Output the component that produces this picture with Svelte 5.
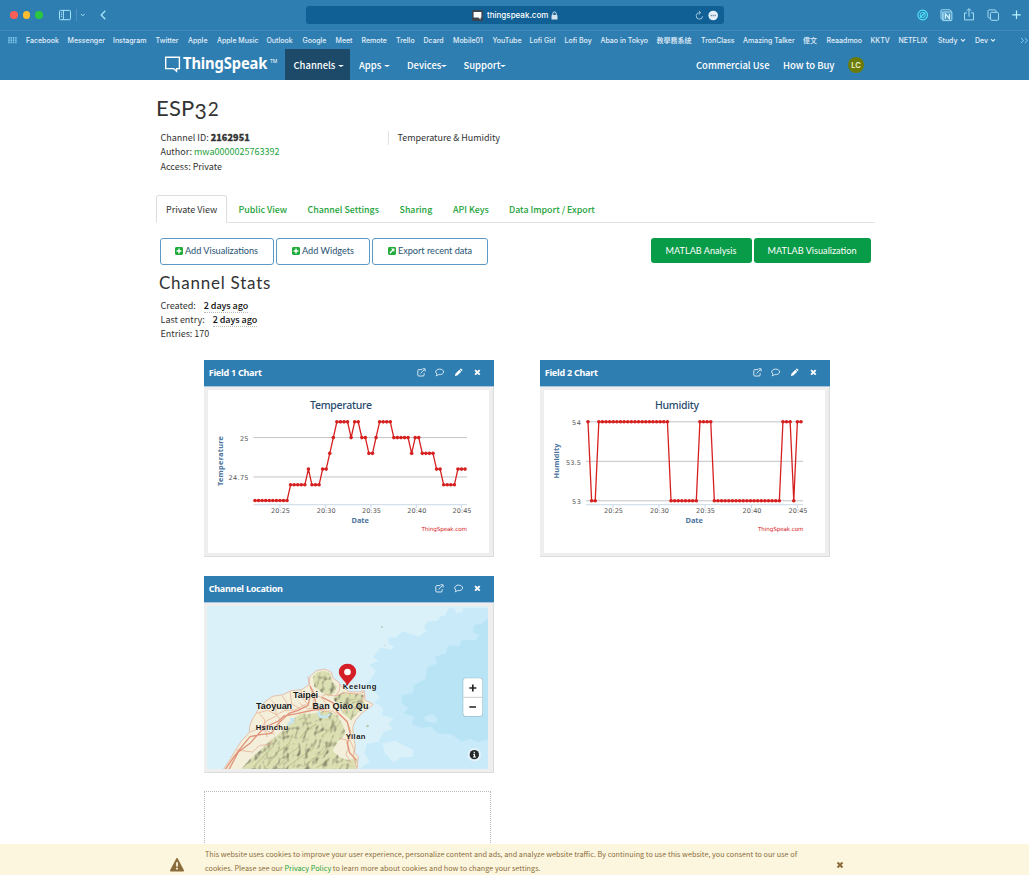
<script>
  const bookmarks = [
    ['Facebook', 41.5], ['Messenger', 45.5], ['Instagram', 42.5], ['Twitter', 32.5], ['Apple', 29],
    ['Apple Music', 49.5], ['Outlook', 36], ['Google', 33], ['Meet', 26], ['Remote', 34.5],
    ['Trello', 27.5], ['Dcard', 29.5], ['Mobile01', 39.5], ['YouTube', 37], ['Lofi Girl', 35],
    ['Lofi Boy', 36], ['Abao in Tokyo', 56], ['教學務系統', 44.5], ['TronClass', 42], ['Amazing Talker', 60],
    ['偉文', 23.5], ['Reaadmoo', 44], ['KKTV', 28], ['NETFLIX', 39.5], ['Study', 37, true], ['Dev', 45, true]
  ];
  const cols = bookmarks.map((b) => b[1] + 'px').join(' ');

  const expand = (runs) => runs.flatMap(([v, n]) => Array(n).fill(v));
  const temperature = expand([
    [24.6, 10], [24.7, 5], [24.8, 1], [24.7, 3], [24.8, 2], [24.9, 1], [25, 1], [25.1, 4], [25, 1],
    [25.1, 2], [25, 2], [24.9, 2], [25, 1], [25.1, 4], [25, 5], [24.9, 1], [25, 2], [24.9, 4],
    [24.8, 2], [24.7, 4], [24.8, 3]
  ]);
  const humidity = expand([[54, 1], [53, 2], [54, 20], [53, 8], [54, 4], [53, 19], [54, 3], [53, 1], [54, 2]]);

  const charts = [
    {
      head: 'Field 1 Chart', title: 'Temperature', tx: 102, tw: 62, x0: 47, step: 3.56, left: 45.5, right: 259,
      yl: 14.5, ylen: 50, ymid: 71, ticks: [[25, '25', 8.5], [24.75, '24.75', 20]],
      y: (v) => 47.6 - (v - 25) * 157.4,
      data: temperature, xt: [72, 117.7, 163, 208.3, 253.5], dx: 143.5, cx: 259
    },
    {
      head: 'Field 2 Chart', title: 'Humidity', tx: 111, tw: 44, x0: 44, step: 3.61, left: 42, right: 259,
      yl: 15, ylen: 35, ymid: 71, ticks: [[54, '54', 9], [53.5, '53.5', 15], [53, '53', 9]],
      y: (v) => 31.8 + (54 - v) * 79,
      data: humidity, xt: [69, 115, 161, 207.5, 253.5], dx: 141.5, cx: 259.5
    }
  ];
  const times = ['20:25', '20:30', '20:35', '20:40', '20:45'];
  const pts = (c) => c.data.map((v, i) => [c.x0 + i * c.step, c.y(v)]);
</script>

{#snippet caret()}<i class="caret"></i>{/snippet}

{#snippet tools(edit)}
  <span class="tools">
    <svg width="9" height="9" viewBox="0 0 9 9"><path d="M5 1.6H1.8Q.8 1.6.8 2.6V7q0 1 1 1h4.3q1 0 1-1V5.2M3.4 5.5L7.6 1.3M5.4.8H8.1V3.5" /></svg>
    <svg width="9" height="9" viewBox="0 0 9 9"><path d="M4.7 1.1C2.5 1.1.7 2.3.7 3.9c0 .9.5 1.6 1.3 2.1 0 .8-.4 1.3-.8 1.8 1.1-.2 1.8-.6 2.4-1.2 2.9.4 5-1 5-2.7 0-1.6-1.7-2.8-3.9-2.8Z" /></svg>
    {#if edit}
      <svg width="9" height="9" viewBox="0 0 9 9"><path class="solid" d="M.9 8.1L1.4 5.7 5.3 1.8 7.2 3.7 3.3 7.6ZM5.8 1.3l.6-.6q.4-.3.8 0L8.3 1.8q.3.4 0 .8l-.6.6Z" /></svg>
    {/if}
    <svg width="9" height="9" viewBox="0 0 9 9"><path class="cross" d="M2.1 2.1L6.7 6.7M6.7 2.1L2.1 6.7" /></svg>
  </span>
{/snippet}

<div class="page">
  <header>
    <div class="toolbar">
      <span class="lights"><i></i><i></i><i></i></span>
      <svg class="side" width="50" height="14" viewBox="0 0 50 14"><rect x="1.5" y="2.4" width="11" height="9.3" rx="1" /><path d="M5.4 2.4V11.7M3 4.8h1M3 6.6h1M3 8.4h1" /><path class="sep" d="M18.5 1V13" /><path d="M23 6.2l1.8 1.5 1.8-1.5" /><path class="back" d="M47.3 2.8L43.2 7l4.1 4.2" /></svg>
      <div class="address">
        <svg width="11" height="11" viewBox="0 0 11 11"><rect width="11" height="11" rx="1" fill="#3c4650" /><path d="M1.6 2h7.8v5.6H8.6V9.6L6.2 7.6H1.6Z" fill="#fff" /></svg>
        <span>thingspeak.com</span>
        <svg width="7" height="9" viewBox="0 0 7 9"><rect x=".5" y="4" width="6" height="4.6" rx=".7" fill="#d5e3ee" /><path d="M1.8 4.2V2.6q0-1.7 1.7-1.7t1.7 1.7V4.2" fill="none" stroke="#d5e3ee" /></svg>
        <svg class="reload" width="24" height="11" viewBox="0 0 24 11"><path d="M7.6 6.2A3.2 3.2 0 1 1 5 2.8M3.8.8L5.7 2.8 3.8 4.6" fill="none" stroke="#a9d0e8" stroke-width=".9" /><circle cx="18.2" cy="5.5" r="4.8" fill="#e5f1fa" /><path d="M15.6 5.5h5.2" stroke="#63829f" stroke-width="1.3" stroke-dasharray="1.2 .8" /></svg>
      </div>
      <svg class="actions" width="108" height="16" viewBox="0 0 108 16">
        <g fill="none" stroke="#a4def5">
          <circle cx="7.7" cy="8" r="4.8" stroke="#4fe2fa" stroke-width="1.2" /><circle cx="7.7" cy="8" r="2.6" stroke="#4fe2fa" /><path d="M5.2 10.5l5-5" stroke="#4fe2fa" stroke-width="1.2" />
          <path d="M26.3 4.3l1.6 1.5V13.4L26 11.4V3.4Q26 2.8 26.8 2.8h7.9l2 1.6" /><rect x="27.9" y="4.9" width="9" height="8.7" rx=".6" fill="#a4def5" fill-opacity=".3" /><path d="M30.4 11.7V6.9l4 4.8V6.9" stroke="#d3f2ff" stroke-width="1.2" />
          <path d="M51.9 5.9H49.5v7h9v-7H56.1M54 9.7V1.8M51.8 3.8L54 1.6l2.2 2.2" />
          <rect x="73" y="2.9" width="8" height="8" rx="1.3" /><rect x="75.5" y="5.3" width="8" height="8" rx="1.3" fill="#2f7eb1" />
          <path d="M97.3 7.8h8.4M101.5 3.6v8.4" stroke="#b8f4ff" stroke-width="1.2" />
        </g>
      </svg>
    </div>
    <div class="bookmarks">
      <svg width="9" height="7" viewBox="0 0 9 7"><path d="M1 0V7M3.3 0V7M5.6 0V7M7.9 0V7" stroke="#7fc6ee" stroke-width="1.5" stroke-dasharray="1.7 .6" /></svg>
      <div class="marks" style:grid-template-columns={cols}>
        {#each bookmarks as [name, , menu]}
          <span>{name}{#if menu}<svg width="6" height="5" viewBox="0 0 6 5"><path d="M1 1.2l2 2 2-2" fill="none" stroke="#e0effa" stroke-width="1.2" /></svg>{/if}</span>
        {/each}
      </div>
      <svg width="9" height="7" viewBox="0 0 9 7"><path d="M1 1l2.6 2.5L1 6M4.8 1l2.6 2.5L4.8 6" fill="none" stroke="#83cdf2" stroke-width="1" /></svg>
    </div>
    <nav>
      <svg class="logo" width="121" height="31" viewBox="0 0 121 31">
        <path d="M1.7 8.2H15.4V19.6H12.6V22.3L9.6 19.6H1.7Z" fill="none" stroke="#fff" stroke-width="1.4" />
        <text transform="translate(19 20) scale(.92 1)" textLength="91.8">ThingSpeak</text>
        <text class="tm" x="106" y="14">TM</text>
      </svg>
      <a class="active" href="#channels">Channels {@render caret()}</a>
      <a href="#apps" class="apps">Apps {@render caret()}</a>
      <a href="#devices" class="devices">Devices{@render caret()}</a>
      <a href="#support" class="support">Support{@render caret()}</a>
      <a href="#use" class="use">Commercial Use</a>
      <a href="#buy" class="buy">How to Buy</a>
      <span class="avatar">LC</span>
    </nav>
  </header>

  <main>
    <h1>ESP<span>3</span><em>2</em></h1>
    <section class="info">
      <div>
        <p>Channel ID: <b>2162951</b></p>
        <p>Author: <a href="#author">mwa0000025763392</a></p>
        <p>Access: Private</p>
      </div>
      <p class="desc">Temperature &amp; Humidity</p>
    </section>

    <div class="tabs">
      <span class="tab">Private View</span>
      <a href="#public">Public View</a>
      <a href="#settings">Channel Settings</a>
      <a href="#sharing">Sharing</a>
      <a href="#keys">API Keys</a>
      <a href="#data">Data Import / Export</a>
    </div>

    <div class="buttons">
      <button class="b1"><svg width="8" height="8" viewBox="0 0 8 8"><rect width="8" height="8" rx="1.4" fill="#20ab3c" /><path d="M4 1.6V6.4M1.6 4H6.4" stroke="#fff" stroke-width="1.4" /></svg>Add Visualizations</button>
      <button class="b2"><svg width="8" height="8" viewBox="0 0 8 8"><rect width="8" height="8" rx="1.4" fill="#20ab3c" /><path d="M4 1.6V6.4M1.6 4H6.4" stroke="#fff" stroke-width="1.4" /></svg>Add Widgets</button>
      <button class="b3"><svg width="8" height="8" viewBox="0 0 8 8"><rect width="8" height="8" rx="1.4" fill="#20ab3c" /><path d="M1.8 6.2L5 3" stroke="#fff" stroke-width="1.4" /><path d="M3 1.6H6.4V5Z" fill="#fff" /></svg>Export recent data</button>
      <button class="green g1">MATLAB Analysis</button>
      <button class="green g2">MATLAB Visualization</button>
    </div>

    <h2>Channel Stats</h2>
    <section class="stats">
      <p>Created: <span>2 days ago</span></p>
      <p>Last entry: <span>2 days ago</span></p>
      <p>Entries: 170</p>
    </section>

    <div class="cards">
      {#each charts as c}
        <article>
          <h3>{c.head}{@render tools(true)}</h3>
          <div class="body">
            <svg width="281" height="163" viewBox="0 0 281 163">
              <rect width="281" height="163" fill="#fff" />
              <text class="title" x={c.tx} y="18.7" textLength={c.tw}>{c.title}</text>
              {#each c.ticks as [v, label, w]}
                <path d="M{c.left} {c.y(v)}H{c.right}" stroke="#c4c4c4" />
                <text class="tick" x={c.left - 5 - w} y={c.y(v) + 3.4} textLength={w}>{label}</text>
              {/each}
              <path d="M{c.left} 114.7H{c.right}" stroke="#cbd9e6" />
              {#each c.xt as x, i}
                <path d="M{x} 115v3" stroke="#cbd9e6" />
                <text class="tick" x={x - 9} y="123.3" textLength="19">{times[i]}</text>
              {/each}
              <text class="axis" x={c.dx} y="133.3" textLength="17.5">Date</text>
              <text class="axis" transform="translate({c.yl} {c.ymid + c.ylen / 2}) rotate(-90)" textLength={c.ylen}>{c.title}</text>
              <text class="credit" x={c.cx - 45.5} y="141" textLength="45.5">ThingSpeak.com</text>
              <polyline points={pts(c).join(' ')} fill="none" stroke="#d62020" stroke-width="1.3" stroke-linejoin="round" />
              {#each pts(c) as [x, y]}<circle cx={x} cy={y} r="1.8" fill="#d62020" />{/each}
            </svg>
          </div>
        </article>
      {/each}

      <article>
        <h3>Channel Location{@render tools(false)}</h3>
        <div class="body map">
          <svg width="281" height="163" viewBox="22 108 842 489" preserveAspectRatio="none">
            <defs>
              <filter id="relief" x="0" y="0" width="100%" height="100%" color-interpolation-filters="sRGB">
                <feTurbulence type="fractalNoise" baseFrequency=".05 .04" numOctaves="2" seed="5" result="n" />
                <feDiffuseLighting in="n" surfaceScale="9" diffuseConstant="1.28" lighting-color="#fff" result="l"><feDistantLight azimuth="225" elevation="54" /></feDiffuseLighting>
                <feBlend in="SourceGraphic" in2="l" mode="multiply" result="b" />
                <feComposite in="b" in2="SourceGraphic" operator="in" result="c" />
                <feComponentTransfer in="SourceGraphic" result="s"><feFuncA type="linear" slope=".4" /></feComponentTransfer>
                <feMerge><feMergeNode in="c" /><feMergeNode in="s" /></feMerge>
              </filter>
            </defs>
            <rect x="22" y="108" width="842" height="489" fill="#dbf1fa" />
            <path fill="#c9eaf9" d="M864 115H745L738 135 720 140 712 152 684 154 672 170 680 184 655 199 607 184 590 202 565 204 566 222 583 228 575 240 542 232 520 262 536 273 508 285 528 302 512 330 490 350 525 365 540 380 525 398 550 414 546 435 582 446 565 460 578 478 552 485 536 515 501 521 494 550 510 576 477 597H864Z" />
            <path fill="#dbf1fa" d="M548 520L586 512 610 525 641 540 638 560 605 562 580 577 554 548ZM484 246l10-3 3 20-10 4ZM762 116l25-3 2 12-20 4Z" />
            <path fill="#b9e4f6" d="M864 145L845 162 823 164 818 187 838 196 826 211 786 209 778 229 744 226 738 250 705 260 712 280 682 292 677 328 642 345 640 369 608 375 604 398 625 415 611 430 645 440 634 462 665 474 695 470 713 490 755 493 785 515 811 506 835 517 864 508Z" />
            <path fill="#c9eaf9" d="M672 440l25-8 18 14-9 13-28-5ZM570 395l16-4 5 13-17 4ZM735 545l45 6 3 30-28 16H720Z" />
            <circle cx="546" cy="171" r="3" fill="#b9cdb8" /><circle cx="556" cy="226" r="2" fill="#b9cdb8" /><circle cx="503" cy="468" r="4" fill="#b9c7a8" />
            <path fill="#f3efda" stroke="#dfa78d" stroke-width="2" d="M70 600L88 573 108 540 125 513 149 487 150 468 158 448 174 421 196 395 218 379 250 374 274 362 305 359 327 345 330 320 350 302 375 297 395 307 400 325 415 335 425 350 448 365 475 366 493 362 496 390 520 403 506 416 487 428 467 451 459 472 461 499 466 525 464 548 475 560 472 600Z" />
            <g filter="url(#relief)" fill="#dcdfb2">
              <path d="M122 600L150 568 182 540 204 516 233 495 250 480 271 455 300 432 342 430 381 421 414 437 430 465 437 493 415 514 399 542 421 562 446 571 470 562V600Z" />
              <path d="M338 321L352 306 377 302 393 312 398 337 412 348 405 370 386 381 364 366 343 350ZM399 383L430 367 476 371 490 374 493 397 503 407 476 426 455 451 431 433Z" />
            </g>
            <path fill="none" stroke="#a9ad78" stroke-opacity=".55" stroke-width="3" d="M160 592L205 545 222 528M200 590L232 548 268 520 280 492M238 588L268 552 300 530M262 592L300 562 338 538 352 508M310 590L340 566 372 548 388 516M350 594L384 570M300 505L322 480 350 462M365 500L390 478 402 452M345 345L366 322 380 318M420 412L446 392 470 386" />
            <path fill="#c6e5ee" d="M270 443l16 2-4 12-15 10-5-5 10-8ZM357 420l6 14 16 3 10-8 3 6-13 10-19-1-8-14Z" />
            <g fill="none" stroke="#e6a58b" stroke-width="2">
              <path d="M170 430L204 421 230 434 257 421 286 420 320 402M179 430L195 450 196 480 225 493M213 389L229 405 228 431 243 451 232 474M247 377l14 22-3 22M271 366l5 36 24 14M303 361l8 27 16 18M151 486l31-12 19-22 29-14M330 347l-6-28M330 347l8 25 24 9 15 17-3 17-20 6-16-14 4-25M364 381l13-8 29 5 13-17 1-20M299 399l25 18 22-6 24 13 29-1 17 15M111 540l47 6 22-20 28-2 11-14M406 378l31-10 39 5 18-8M494 374l-9 22-22 17-19 3-16 12M443 460l10 25-3 25 13 28-2 22 10 34M420 505l20 5 5 27-7 15 15 26M182 475l17 11 3 15" />
            </g>
            <g fill="none" stroke="#e0937a" stroke-width="4">
              <path d="M77 598L101 563 126 530 151 500 182 494 214 490 239 457 268 430 295 421 325 406 331 379M88 598L116 546 151 520 172 496 194 473 236 453 252 438 291 431 341 420 386 415M331 348L344 374 349 412M367 382L399 398 412 426 442 455 451 490 443 520 449 547 470 571" />
            </g>
            <g class="places">
              <text x="280" y="383" textLength="75">Taipei</text>
              <text x="169" y="416" textLength="108">Taoyuan</text>
              <text x="338" y="418" textLength="168">Ban Qiao Qu</text>
              <text class="small" x="429" y="358" textLength="101">Keelung</text>
              <text class="small" x="168" y="479" textLength="97">Hsinchu</text>
              <text class="small" x="438" y="507" textLength="59">Yilan</text>
            </g>
            <path fill="#d51f26" d="M443 347C434 330 417 321 417 306a26 25 0 0 1 52 0C469 321 452 330 443 347Z" /><circle cx="443" cy="306" r="10" fill="#fff" />
            <rect x="788" y="323" width="61" height="117" rx="9" fill="#9cbfce" /><rect x="790" y="325" width="57" height="113" rx="7" fill="#fff" />
            <path d="M790 382H847" stroke="#ccc" stroke-width="3" /><path d="M808 354h21M818.5 343.5v21M808 411h20" stroke="#222" stroke-width="5" />
            <circle cx="823" cy="554" r="20" fill="#e6f3f8" /><circle cx="823" cy="554" r="14" fill="#252a2c" /><path d="M823 545v4M820 553h3.5v8M819 561h9" fill="none" stroke="#fff" stroke-width="3.5" />
          </svg>
        </div>
      </article>
      <i></i>
      <div class="drop"></div>
    </div>
  </main>

  <footer>
    <svg width="16" height="15" viewBox="0 0 16 15"><path d="M8 1.7L14.3 13.7H1.7Z" fill="#8a6d3b" stroke="#8a6d3b" stroke-width="1.4" stroke-linejoin="round" /><path d="M8 5.2V9.4M8 10.7V12.5" stroke="#fdf6df" stroke-width="1.8" /></svg>
    <div>
      <p>This website uses cookies to improve your user experience, personalize content and ads, and analyze website traffic. By continuing to use this website, you consent to our use of</p>
      <p>cookies. Please see our <a href="#privacy">Privacy Policy</a> to learn more about cookies and how to change your settings.</p>
    </div>
    <svg class="close" width="8" height="8" viewBox="0 0 8 8"><path d="M1.5 1.5L6.5 6.5M6.5 1.5L1.5 6.5" stroke="#8a6d3b" stroke-width="2.1" /></svg>
  </footer>
</div>

<style>
  :global(body) { margin: 0; background: #fff; }
  .page { width: 1029px; height: 875px; overflow: hidden; display: flex; flex-direction: column; font: 9px/14px 'Noto Sans CJK SC', 'Noto Sans', sans-serif; color: #333; }
  p, h1, h2, h3 { margin: 0; font-weight: 400; }
  p, a, span, button { white-space: nowrap; }
  a { text-decoration: none; color: #1ba239; }
  svg { flex: none; display: block; }
  header { height: 80px; flex: none; background: #2f7eb1; color: #fff; }
  .toolbar { height: 31px; box-sizing: border-box; display: flex; align-items: center; padding-left: 10px; border-bottom: 1px solid #4088b8; }
  .lights { display: flex; gap: 5px; width: 48px; }
  .lights i { width: 7.6px; height: 7.6px; border-radius: 50%; background: #fe5f57; }
  .lights i:nth-child(2) { background: #febc2e; }
  .lights i:nth-child(3) { background: #29c840; }
  .side { fill: none; stroke: #a4e4fb; }
  .side .sep { stroke: #4a90be; }
  .side .back { stroke-width: 1.3; }
  .address { width: 418px; height: 18px; margin-left: 198px; border-radius: 3px; background: #116095; display: flex; align-items: center; box-sizing: border-box; padding-left: 166px; font: 500 8px/18px Inter, sans-serif; }
  .address span { width: 61px; margin: 0 3px 0 4px; }
  .address .reload { margin-left: 137px; }
  .actions { margin-left: 191px; }
  .bookmarks { height: 18px; box-sizing: border-box; display: flex; align-items: center; padding: 1px 0 0 8px; font: 500 7px/17px Inter, 'Noto Sans CJK TC', sans-serif; color: #e3effa; }
  .marks { display: grid; width: 993px; margin-left: 9px; margin-right: 1px; }
  .marks span { display: flex; align-items: center; gap: 2px; height: 17px; }
  nav { height: 31px; display: flex; font-weight: 500; font-size: 9.45px; line-height: 31px; }
  nav a { color: #fff; display: flex; align-items: center; box-sizing: border-box; padding-top: 1px; }
  .logo { margin-left: 164px; }
  .logo text { font: 700 16px 'Noto Sans', sans-serif; fill: #fff; }
  .logo .tm { font: 5px 'Noto Sans', sans-serif; }
  .caret { border: 2.5px solid transparent; border-top: 2.5px solid #fff; border-bottom: 0; margin-left: 4px; margin-top: 1px; border-left-width: 3px; border-right-width: 3px; }
  .active { background: #1c4a68; width: 65px; padding-left: 8.5px; }
  .apps { margin-left: 9px; width: 48px; }
  .apps .caret, .active .caret { margin-left: 3px; }
  .devices { width: 56.5px; }
  .support { width: 232.5px; }
  .devices .caret, .support .caret { margin-left: 0; }
  .use { width: 87px; }
  .buy { width: 65px; }
  .avatar { width: 16px; height: 16px; border-radius: 50%; background: #6b7b06; font: 600 7.5px/17px Inter, sans-serif; text-align: center; margin-top: 8px; color: #f1f3d8; }
  main { flex: 1; min-height: 0; overflow: hidden; }
  h1 { font: 22px/28px Lato, sans-serif; margin: 14px 0 0 156px; height: 36.5px; letter-spacing: .2px; }
  h1 span { display: inline-block; font-size: 21px; line-height: 20px; transform: translateY(3px); }
  h1 em { font-style: normal; font-size: 19px; line-height: 20px; margin-left: .8px; }
  .info { display: flex; padding-left: 160.5px; height: 64px; }
  .info > div { width: 227px; }
  .info > div p { line-height: 14.7px; }
  .info b { font-weight: 900; -webkit-text-stroke: .3px #333; letter-spacing: .12px; }
  .desc { border-left: 1px solid #e2e2e2; height: 14px; padding-left: 9px; line-height: 14px; letter-spacing: -.03px; }
  .tabs { margin-left: 156px; width: 719px; height: 28px; box-sizing: border-box; border-bottom: 1px solid #e3e3e3; display: flex; line-height: 29px; font-weight: 500; font-size: 8.85px; }
  .tab { width: 71px; height: 28px; box-sizing: border-box; border: 1px solid #ddd; border-bottom-color: #fff; border-radius: 3px 3px 0 0; font-weight: 400; font-size: 9px; padding-left: 9px; margin-right: 11.5px; line-height: 27px; }
  .tabs a:nth-child(2) { width: 69px; }
  .tabs a:nth-child(3) { width: 92px; }
  .tabs a:nth-child(4) { width: 53.5px; }
  .tabs a:nth-child(5) { width: 56px; }
  .buttons { display: flex; margin: 15.5px 0 0 159.5px; height: 26.5px; }
  button { font: 9.15px/24px Lato, sans-serif; height: 26.5px; box-sizing: border-box; border: 1px solid #5b9ac4; border-radius: 3px; background: #fff; color: #255272; display: flex; align-items: center; justify-content: center; gap: 2px; padding: 0; }
  .b1 { width: 114px; }
  .b2 { width: 94px; margin-left: 2.5px; }
  .b3 { width: 116px; margin-left: 2px; }
  .green { background: #089b48; border: 0; color: #fff; height: 25px; }
  .g1 { width: 101px; margin-left: 162.5px; }
  .g2 { width: 117px; margin-left: 2px; }
  h2 { font: 17px/20px Lato, sans-serif; letter-spacing: .75px; margin: 8px 0 0 159px; height: 26.5px; }
  .stats { padding-left: 160.5px; height: 61px; }
  .stats p { line-height: 13.7px; }
  .stats span { font-weight: 500; color: #111; margin-left: 6px; display: inline-block; line-height: 12px; border-bottom: 1px dotted #bbb; letter-spacing: -.06px; }
  .cards { display: grid; grid-template-columns: 290px 290px; grid-template-rows: 197px 197px 120px; gap: 19px 46px; padding-left: 203.7px; }
  article { background: #eee; box-sizing: border-box; border: 1px solid #dcdcdc; border-top: 0; border-left-color: #eee; }
  h3 { height: 26.5px; margin: 0 -1px; padding: 0 12px 0 5px; box-sizing: border-box; background: #2f7eb1; color: #fff; font: 700 9px/25px 'Noto Sans', sans-serif; letter-spacing: -.24px; display: flex; justify-content: space-between; border-bottom: 1px solid #a9c7dc; }
  .tools { display: flex; gap: 9.7px; align-items: center; }
  .tools path { fill: none; stroke: #e5f2fa; stroke-width: .9; }
  .tools .solid { fill: #fff; stroke: none; }
  .tools .cross { stroke: #fff; stroke-width: 1.9; }
  .body { padding: 3.5px 0 0 3px; }
  .map { padding: 3px 0 0 2px; }
  .title { font: 500 10.5px 'Noto Sans', sans-serif; fill: #274b6d; }
  .tick { font: 6.5px 'DejaVu Sans', sans-serif; fill: #555; }
  .axis { font: 700 7.4px 'Noto Sans', sans-serif; fill: #4d759e; }
  .credit { font: 5.6px 'DejaVu Sans', sans-serif; fill: #d62020; }
  .places text { font: 700 27px 'Liberation Sans', sans-serif; fill: #16191a; stroke: #fff; stroke-opacity: .4; stroke-width: 3; paint-order: stroke; }
  .places .small { font-size: 23px; }
  .drop { border: 1.5px dotted #bbb; width: 285px; height: 100px; margin-top: -1px; }
  footer { height: 31px; flex: none; background: #fdf6df; color: #8a6d3b; display: flex; padding-left: 168.5px; box-sizing: border-box; font-size: 7.28px; line-height: 14px; }
  footer > svg { margin-top: 13px; }
  footer > div { margin: 2.6px 0 0 20.5px; width: 631px; }
  footer .close { margin-top: 16.5px; }
</style>
